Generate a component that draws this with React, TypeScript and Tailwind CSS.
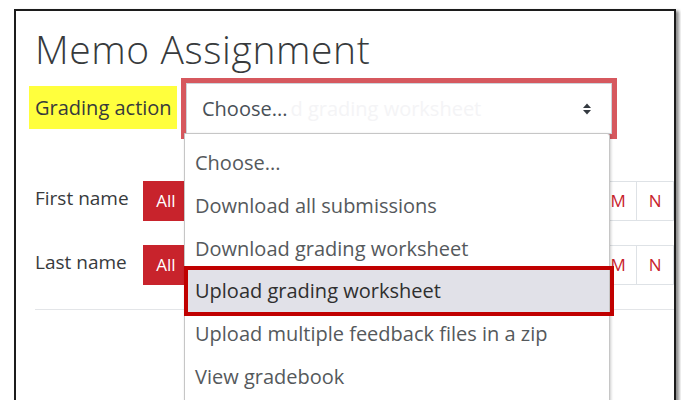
import React from "react";

const letters = ["A", "B", "C", "D", "E", "F", "G", "H", "I", "J", "K", "L", "M", "N"];

const options = [
  "Choose...",
  "Download all submissions",
  "Download grading worksheet",
  "Upload grading worksheet",
  "Upload multiple feedback files in a zip",
  "View gradebook",
];

function SortArrows() {
  return (
    <svg width="10" height="14" viewBox="0 0 10 14" className="block">
      <path d="M1 6 L5 1.5 L9 6 Z" fill="#343a40" />
      <path d="M1 8 L5 12.5 L9 8 Z" fill="#343a40" />
    </svg>
  );
}

function InitialsRow({ label }: { label: string }) {
  return (
    <div className="flex items-start h-[40px]">
      <div className="w-[108px] h-[40px] flex items-center pb-[6px] text-[19px] text-[#373a3c]">{label}</div>
      <div className="w-[46px] h-[40px] bg-[#c8232c] text-white text-[17px] flex items-center justify-center">All</div>
      <div className="flex-1 flex h-[40px]">
        {letters.map((l, i) => (
          <div
            key={l}
            className={
              "-ml-px first:ml-0 border border-[#dee2e6] flex items-center justify-center text-[17px] text-[#c8232c] " +
              (i >= 12 ? "w-[38px] shrink-0" : "flex-1")
            }
          >
            {l}
          </div>
        ))}
      </div>
    </div>
  );
}

export default function App() {
  return (
    <div className="w-[681px] h-[400px] bg-white overflow-hidden" style={{ fontFamily: '"Open Sans", "Noto Sans", sans-serif' }}>
      <div className="ml-[14px] mt-[9px] w-[662px] h-[400px] border-2 border-[#1c1c1c] bg-white shadow-[3px_2px_3px_rgba(0,0,0,0.45)] relative">
        <div className="pl-[19px] pr-0 overflow-hidden h-full">
          <h1 className="mt-[15px] text-[39px] leading-[46px] font-light text-[#373a3c] tracking-[0.6px]">Memo Assignment</h1>

          <div className="mt-[6px] flex items-start -ml-[6px]">
            <div className="mt-[8px] w-[148px] h-[43px] px-[6px] bg-[#ffff3d] flex items-center text-[20px] text-[#373a3c] whitespace-nowrap">
              Grading action
            </div>
            <div className="ml-[4px] w-[436px] h-[61px] border-[5px] border-[#d6585e] relative">
              <div className="h-full bg-white border border-[#ced4da] flex items-center pl-[15px] pr-[19px]">
                <span className="text-[20px] text-[#495057]">Choose...</span>
                <span className="ml-[3px] text-[20px] text-[#f4f4f6]">d grading worksheet</span>
                <span className="ml-auto">
                  <SortArrows />
                </span>
              </div>

              <div className="absolute left-[-2px] top-[50px] w-[426px] h-[300px] z-10 bg-white border border-[#c6c6c6] rounded-tr-[3px] shadow-[1px_1px_3px_rgba(0,0,0,0.2)] pt-[8px]">
                {options.map((o, i) => {
                  const active = i === 3;
                  return (
                    <div
                      key={o}
                      className={
                        "relative h-[42.7px] pl-[10px] flex items-center text-[20px] whitespace-nowrap " +
                        (active ? "bg-[#e1e1e8] text-[#2f2f2f]" : "text-[#55595c]")
                      }
                    >
                      {active && (
                        <div className="absolute -left-px -right-[5px] -top-[4px] -bottom-[3px] border-[4px] border-[#c00000]" />
                      )}
                      <span className="relative">{o}</span>
                    </div>
                  );
                })}
              </div>
            </div>
          </div>

          <div className="mt-[42px]">
            <InitialsRow label="First name" />
          </div>
          <div className="mt-[24px]">
            <InitialsRow label="Last name" />
          </div>

          <div className="mt-[24px] border-t border-[#e3e5e8]" />
        </div>
      </div>
    </div>
  );
}
